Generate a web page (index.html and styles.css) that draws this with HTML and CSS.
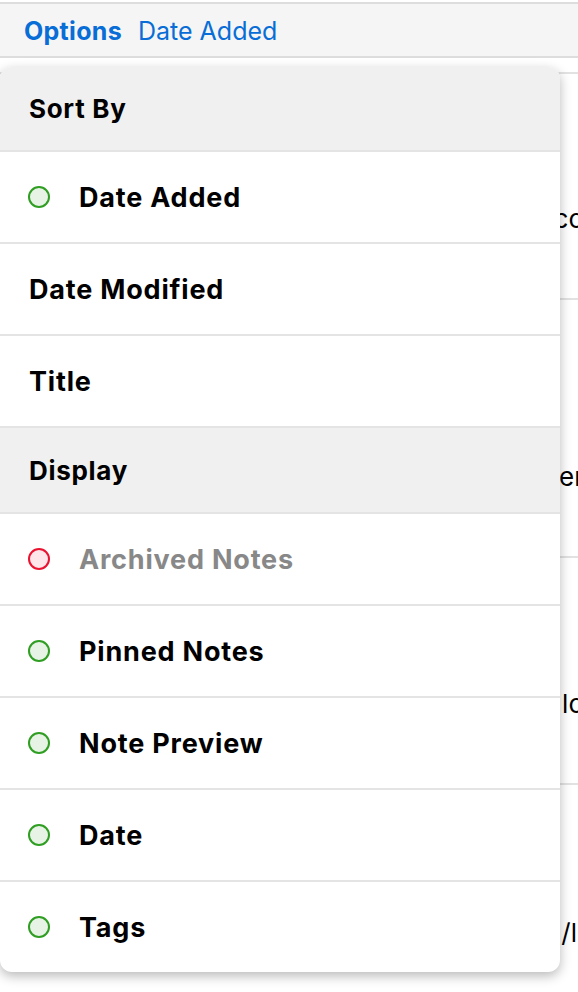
FILE: index.html
```html
<!DOCTYPE html>
<html lang="en">
<head>
    <meta charset="UTF-8">
    <meta name="viewport" content="width=device-width, initial-scale=1.0">
    <title>Notes - Options</title>
    <link rel="stylesheet" href="styles.css">
</head>
<body>
    <div class="toolbar">
        <span class="options">Options</span>
        <span class="sort-label">Date Added</span>
    </div>

    <!-- note list behind the menu -->
    <div class="notes">
        <div class="note note-a"><div class="note-title">Getting started: a quick intro to the app co</div></div>
        <div class="note note-b"><div class="note-title">Shopping list and reminders for later</div></div>
        <div class="note note-c"><div class="note-title">Ideas for the weekend trip, with photos lo</div></div>
        <div class="note note-d"><div class="note-title">Links: example.org /l</div></div>
    </div>

    <div class="menu">
        <div class="menu-header">Sort By</div>
        <div class="menu-item"><span class="dot on"></span>Date Added</div>
        <div class="menu-item">Date Modified</div>
        <div class="menu-item">Title</div>
        <div class="menu-header">Display</div>
        <div class="menu-item muted"><span class="dot off"></span>Archived Notes</div>
        <div class="menu-item"><span class="dot on"></span>Pinned Notes</div>
        <div class="menu-item"><span class="dot on"></span>Note Preview</div>
        <div class="menu-item"><span class="dot on"></span>Date</div>
        <div class="menu-item"><span class="dot on"></span>Tags</div>
    </div>
</body>
</html>
```

FILE: styles.css
```css
body {
    font-family: Inter, "Noto Sans", sans-serif;
    background-color: #fff;
    color: #000;
    margin: 0;
    padding: 0;
    overflow: hidden;
}

.toolbar {
    margin-top: 2px;
    display: flex;
    align-items: center;
    gap: 16px;
    padding: 2px 24px 0;
    box-sizing: border-box;
    height: 56px;
    background-color: #f5f5f5;
    border-top: 2px solid #dddddd;
    border-bottom: 2px solid #dddddd;
    color: #086dd6;
    font-size: 25px;
}

.options {
    font-weight: 700;
    letter-spacing: 0.3px;
}

.notes {
    margin-top: 14px;
}

.note {
    border-top: 2px solid #e2e2e2;
    box-sizing: border-box;
}

.note-a { height: 226px; padding-top: 129px; }
.note-b { height: 258px; padding-top: 161px; }
.note-c { height: 227px; padding-top: 130px; }
.note-d { height: 200px; padding-top: 132px; }

.note-title {
    display: flex;
    justify-content: flex-end;
    white-space: nowrap;
    overflow: hidden;
    font-size: 26px;
    line-height: 32px;
    margin-right: -6px;
}

.note-d .note-title {
    margin-right: 1px;
}

.menu {
    position: absolute;
    top: 67px;
    left: 0;
    width: 560px;
    background-color: #fff;
    border-radius: 12px;
    overflow: hidden;
    box-shadow: 0 4px 12px rgba(0, 0, 0, 0.28);
}

.menu-header,
.menu-item {
    display: flex;
    align-items: center;
    padding: 0 29px;
    font-weight: 700;
    border-bottom: 2px solid #e4e4e4;
}

.menu-header {
    height: 84px;
    font-size: 26px;
    letter-spacing: 0.7px;
    background-color: #f0f0f0;
}

.menu-header:first-child {
    height: 83px;
}

.menu-item {
    height: 90px;
    font-size: 27px;
    letter-spacing: 0.8px;
}

.menu-item:last-child {
    border-bottom: none;
}

.menu-item.muted {
    color: #888;
}

.dot {
    width: 18px;
    height: 18px;
    border-radius: 50%;
    margin-left: -1px;
    margin-right: 29px;
    flex: none;
}

.dot.on {
    border: 2px solid #2f9e22;
    background-color: #e7f3e5;
}

.dot.off {
    border: 2px solid #ea1230;
    background-color: #fde5e9;
}
```
